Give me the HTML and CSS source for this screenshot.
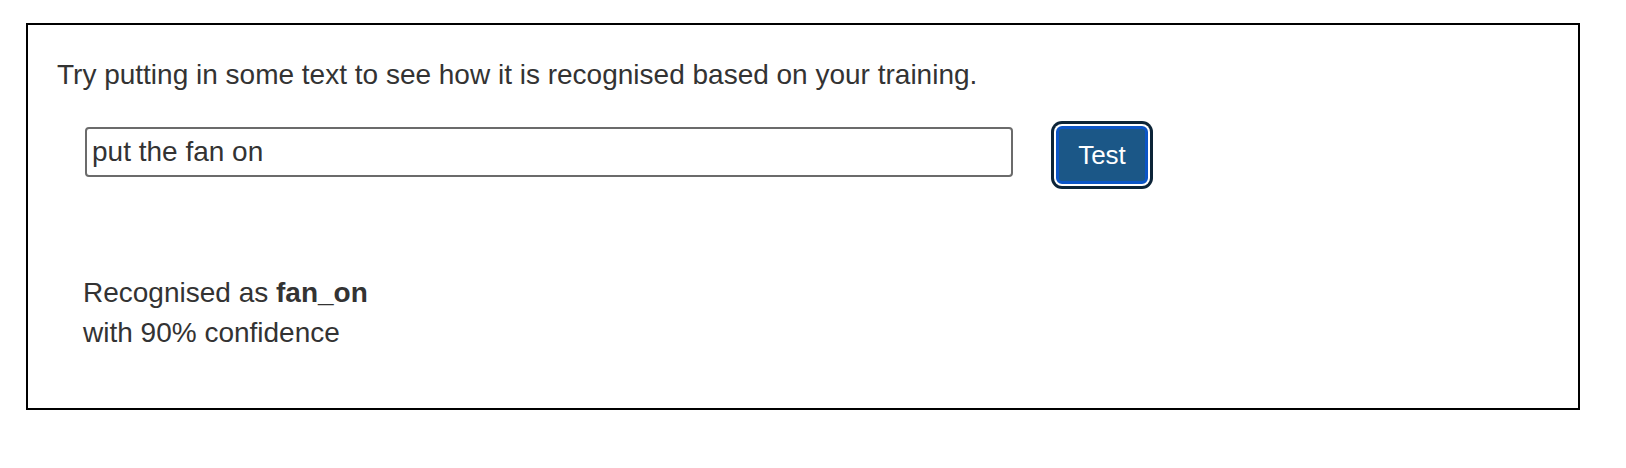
FILE: index.html
```html
<!DOCTYPE html>
<html lang="en">
<head>
<meta charset="utf-8">
<title>Test your training</title>
<link rel="stylesheet" href="styles.css">
</head>
<body>
<div class="page">
  <section class="panel">
    <p class="intro">Try putting in some text to see how it is recognised based on your training.</p>
    <div class="test-row">
      <input class="test-input" type="text" value="put the fan on">
      <button class="test-btn" type="button">Test</button>
    </div>
    <div class="result">
      <div>Recognised as <strong>fan_on</strong></div>
      <div>with 90% confidence</div>
    </div>
  </section>
</div>
</body>
</html>
```

FILE: styles.css
```css
html, body {
  margin: 0;
  background: #ffffff;
}

body {
  font-family: "Liberation Sans", Arial, Helvetica, sans-serif;
  font-size: 28px;
  line-height: 40px;
  color: #333333;
}

.page {
  padding: 23px 46px 0 26px;
}

.panel {
  border: 2px solid #000000;
  padding: 30px 29px 55px 29px;
}

.intro {
  margin: 0;
}

.test-row {
  display: flex;
  align-items: flex-start;
  margin-top: 32px;
  padding-left: 28px;
}

.test-input {
  box-sizing: border-box;
  width: 928px;
  height: 50px;
  margin: 0;
  padding: 0 5px;
  border: 2px solid #6b6b6b;
  border-radius: 4px;
  font-family: "Liberation Sans", Arial, Helvetica, sans-serif;
  font-size: 28px;
  color: #333333;
  background: #ffffff;
  outline: none;
}

.test-btn {
  box-sizing: border-box;
  width: 92px;
  height: 58px;
  margin: -1px 0 0 43px;
  padding: 0;
  border: 3px solid #0b55c6;
  border-radius: 6px;
  background: #1b5787;
  color: #ffffff;
  font-family: "Liberation Sans", Arial, Helvetica, sans-serif;
  font-size: 26px;
  line-height: 1;
  box-shadow: 0 0 0 2px #ffffff, 0 0 0 5px #0c2438;
  cursor: pointer;
}

.result {
  margin-top: 89px;
  padding-left: 26px;
}

.result strong {
  font-weight: bold;
}
```
